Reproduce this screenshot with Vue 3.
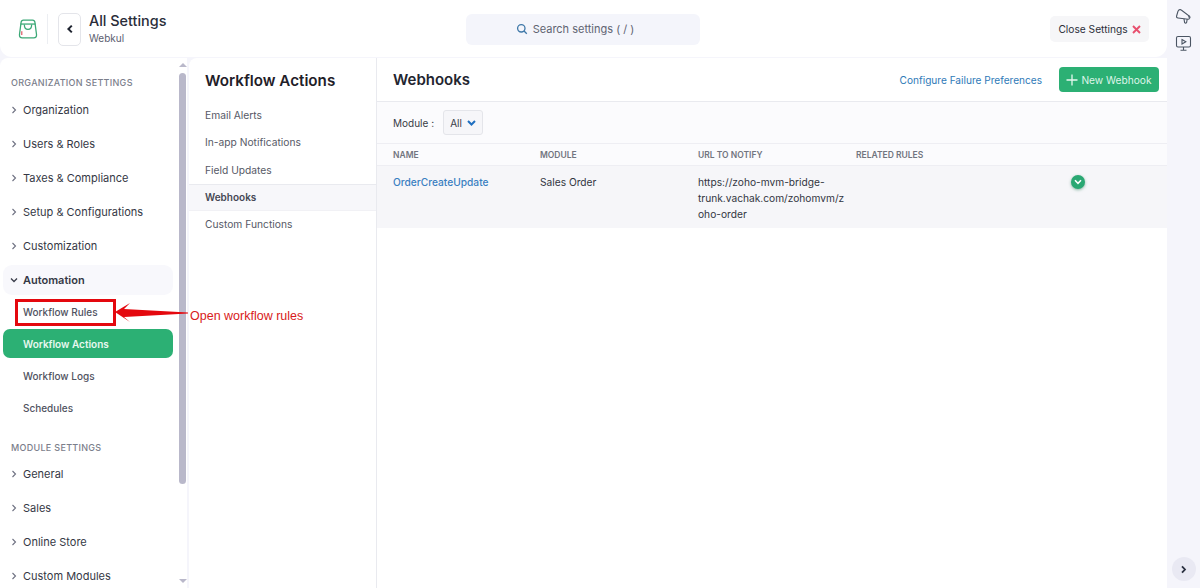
<template>
  <div class="page">
    <div class="workspace">
      <header class="topbar">
        <div class="brand">
          <svg class="logo" width="22" height="22" viewBox="0 0 24 24" fill="none" stroke="#3aa876" stroke-width="1.4">
            <path d="M4.5 4.5 Q4.8 2.2 7 2.2 H17 Q19.2 2.2 19.5 4.5 L21.3 18 Q21.6 21.6 18.3 21.6 H5.7 Q2.4 21.6 2.7 18 Z" />
            <path d="M3.8 6.6 H20.2" />
            <path d="M8 7 Q8 12.4 12 12.4 Q16 12.4 16 7" />
            <path d="M5.2 14.5 V18.5" stroke="#e0606e" />
          </svg>
          <span class="brand-divider"></span>
          <button class="back-btn">
            <svg width="8" height="10" viewBox="0 0 8 10" fill="none" stroke="#1f2430" stroke-width="2">
              <path d="M5.8 1.6 L2.4 5 L5.8 8.4" />
            </svg>
          </button>
          <div class="brand-text">
            <div class="brand-title">All Settings</div>
            <div class="brand-sub">Webkul</div>
          </div>
        </div>
        <div class="search">
          <svg width="12" height="12" viewBox="0 0 12 12" fill="none" stroke="#3f78a8" stroke-width="1.3">
            <circle cx="5.3" cy="5.3" r="3.7" />
            <path d="M8 8 L10.8 10.8" />
          </svg>
          <span>Search settings ( / )</span>
        </div>
        <button class="close-btn">
          Close Settings
          <svg width="9" height="9" viewBox="0 0 9 9" fill="none" stroke="#e8506e" stroke-width="1.9">
            <path d="M1 1 L8 8 M8 1 L1 8" />
          </svg>
        </button>
      </header>

      <div class="body">
        <aside class="sidebar">
          <nav class="side-nav">
            <div class="side-heading">ORGANIZATION SETTINGS</div>
            <div v-for="item in orgItems" :key="item" class="side-item">
              <svg class="chev" width="6" height="8" viewBox="0 0 6 8"><path d="M1.5 1 L4.5 4 L1.5 7" /></svg>
              {{ item }}
            </div>
            <div class="side-item open">
              <svg class="chev down" width="8" height="6" viewBox="0 0 8 6"><path d="M1 1.5 L4 4.5 L7 1.5" /></svg>
              Automation
            </div>
            <div
              v-for="sub in autoItems"
              :key="sub"
              class="sub-item"
              :class="{ active: sub === 'Workflow Actions' }"
            >
              <span>{{ sub }}</span>
            </div>
            <div class="side-heading second">MODULE SETTINGS</div>
            <div v-for="item in moduleItems" :key="item" class="side-item">
              <svg class="chev" width="6" height="8" viewBox="0 0 6 8"><path d="M1.5 1 L4.5 4 L1.5 7" /></svg>
              {{ item }}
            </div>
          </nav>
          <div class="scroll-rail">
            <span class="scroll-up"></span>
            <span class="scroll-thumb"></span>
            <span class="scroll-down"></span>
          </div>
        </aside>

        <section class="actions">
          <h2>Workflow Actions</h2>
          <div
            v-for="a in actionItems"
            :key="a"
            class="action-item"
            :class="{ active: a === 'Webhooks' }"
          >
            {{ a }}
          </div>
        </section>

        <main class="main">
          <div class="main-head">
            <h1>Webhooks</h1>
            <div class="main-tools">
              <a class="pref-link">Configure Failure Preferences</a>
              <button class="new-btn">
                <svg width="12" height="12" viewBox="0 0 12 12" fill="none" stroke="#e6f8ef" stroke-width="1.3">
                  <path d="M6 0.5 V11.5 M0.5 6 H11.5" />
                </svg>
                New Webhook
              </button>
            </div>
          </div>
          <div class="filter">
            <span>Module :</span>
            <div class="select">
              All
              <svg width="9" height="6" viewBox="0 0 9 6" fill="none" stroke="#1f6fc0" stroke-width="2">
                <path d="M1 1 L4.5 4.5 L8 1" />
              </svg>
            </div>
          </div>
          <div class="table-row table-head">
            <div>NAME</div>
            <div>MODULE</div>
            <div>URL TO NOTIFY</div>
            <div>RELATED RULES</div>
            <div></div>
          </div>
          <div class="table-row table-body">
            <div class="hook-name">OrderCreateUpdate</div>
            <div>Sales Order</div>
            <div class="hook-url">https://zoho-mvm-bridge-trunk.vachak.com/zohomvm/zoho-order</div>
            <div></div>
            <div class="hook-status">
              <span class="status-dot">
                <svg width="8" height="6" viewBox="0 0 8 6" fill="none" stroke="#fff" stroke-width="1.6">
                  <path d="M1 1.3 L4 4.3 L7 1.3" />
                </svg>
              </span>
            </div>
          </div>
        </main>
      </div>
    </div>

    <aside class="rail">
      <div class="rail-icons">
        <svg width="16" height="17" viewBox="0 0 16 17" fill="none" stroke="#4b5563" stroke-width="1.1">
          <path d="M5.2 1.6 Q3.8 1.4 3 3.2 L1.6 8 Q1.2 9.8 3 10 L13.2 11.2 Q14.8 11 14.2 9.6 L13.6 7.6 L6.6 2.2 Z" />
          <path d="M9 10.8 L9.6 14.6 Q10.6 15.6 11.6 14.6 L12.2 11.1" />
          <path d="M13.6 7.6 Q15.4 8.4 14.8 10" />
        </svg>
        <svg width="17" height="17" viewBox="0 0 17 17" fill="none" stroke="#4b5563" stroke-width="1.1">
          <rect x="1.5" y="1.5" width="14" height="10.5" rx="1.5" />
          <path d="M7 4.6 L10.8 6.8 L7 9 Z" />
          <path d="M8.5 12 V15 M5.5 15.2 H11.5" />
        </svg>
      </div>
      <button class="rail-toggle">
        <svg width="7" height="9" viewBox="0 0 7 9" fill="none" stroke="#2a3040" stroke-width="1.8">
          <path d="M2 1.3 L5 4.5 L2 7.7" />
        </svg>
      </button>
    </aside>

    <!-- red annotation drawn over the screenshot -->
    <div class="note-box"></div>
    <svg class="note-arrow" width="75" height="20" viewBox="0 0 75 20">
      <path d="M0 9 L15 0 L9 6 L73 9.4 V10.4 L9 14 L15 19 Z" fill="#e4080e" />
    </svg>
    <div class="note-text">Open workflow rules</div>
  </div>
</template>

<script setup>
const orgItems = ['Organization', 'Users & Roles', 'Taxes & Compliance', 'Setup & Configurations', 'Customization']
const autoItems = ['Workflow Rules', 'Workflow Actions', 'Workflow Logs', 'Schedules']
const moduleItems = ['General', 'Sales', 'Online Store', 'Custom Modules']
const actionItems = ['Email Alerts', 'In-app Notifications', 'Field Updates', 'Webhooks', 'Custom Functions']
</script>

<style>
html,
body {
  margin: 0;
  background: #f5f5fb;
}
</style>

<style scoped>
.page {
  position: relative;
  display: flex;
  width: 1200px;
  height: 588px;
  overflow: hidden;
  font-family: Inter, 'Liberation Sans', sans-serif;
  font-size: 11px;
  color: #2c2f3a;
  background: #f5f5fb;
}
.workspace {
  width: 1167px;
  display: flex;
  flex-direction: column;
}

.topbar {
  height: 57px;
  box-sizing: border-box;
  padding: 1px 18px 0 17px;
  display: flex;
  align-items: center;
  background: #fff;
  border-radius: 0 0 12px 12px;
  position: relative;
}
.brand {
  display: flex;
  align-items: center;
  width: 449px;
}
.logo {
  flex: none;
}
.brand-divider {
  width: 1px;
  height: 30px;
  background: #eceef2;
  margin: 0 10px 0 8px;
}
.back-btn {
  width: 23px;
  height: 33px;
  padding: 0;
  display: flex;
  align-items: center;
  justify-content: center;
  background: #fff;
  border: 1px solid #e4e5ea;
  border-radius: 5px;
  margin-right: 8px;
}
.brand-text {
  padding-bottom: 2px;
}
.brand-title {
  font-size: 14.4px;
  font-weight: 500;
  line-height: 18px;
  color: #2a2d3a;
}
.brand-sub {
  font-size: 10px;
  line-height: 14px;
  margin-top: 1px;
  color: #5c6070;
}
.search {
  width: 234px;
  height: 31px;
  box-sizing: border-box;
  padding-right: 16px;
  display: flex;
  align-items: center;
  justify-content: center;
  gap: 5px;
  background: #f4f5fb;
  border-radius: 6px;
  font-size: 11px;
  color: #5f6472;
}
.close-btn {
  margin-left: auto;
  height: 26px;
  width: 99px;
  padding: 0;
  border: 0;
  border-radius: 5px;
  background: #f6f6f8;
  font: inherit;
  font-size: 10.2px;
  color: #2c2f3a;
  display: flex;
  align-items: center;
  justify-content: center;
  gap: 4px;
}

.body {
  flex: 1;
  min-height: 0;
  display: flex;
  margin-top: 1px;
}

.sidebar {
  width: 187px;
  display: flex;
  background: #fff;
  border-radius: 8px 0 0 0;
  overflow: hidden;
}
.side-nav {
  width: 178px;
  box-sizing: border-box;
  padding: 0 5px 0 3px;
  flex: none;
}
.side-heading {
  height: 14px;
  line-height: 14px;
  margin: 18px 0 3px 8px;
  font-size: 9px;
  font-weight: 500;
  letter-spacing: 0.3px;
  color: #7b7e8b;
}
.side-heading.second {
  margin: 17px 0 2px 8px;
}
.side-item {
  height: 34px;
  display: flex;
  align-items: center;
  gap: 6px;
  padding-left: 8px;
  font-size: 11px;
  color: #353845;
}
.side-item.open {
  height: 30px;
  margin: 2px 0 1px;
  gap: 5px;
  padding-left: 7px;
  background: #f8f8fc;
  border-radius: 9px;
  font-weight: 600;
}
.chev {
  flex: none;
  fill: none;
  stroke: #6d7080;
  stroke-width: 1.1;
}
.chev.down {
  stroke: #3a3d49;
  stroke-width: 1.3;
}
.sub-item {
  height: 32px;
  display: flex;
  align-items: center;
  box-sizing: border-box;
  padding-left: 20px;
  font-size: 10px;
  font-weight: 500;
  color: #50535f;
}
.sub-item.active {
  height: 29px;
  margin: 1px 0 2px;
  background: #2cb074;
  border-radius: 7px;
  color: #e8f8f0;
  font-weight: 600;
}
.scroll-rail {
  width: 9px;
  display: flex;
  flex-direction: column;
  align-items: center;
}
.scroll-up,
.scroll-down {
  width: 0;
  height: 0;
  border-left: 4px solid transparent;
  border-right: 4px solid transparent;
}
.scroll-up {
  margin-top: 5px;
  border-bottom: 4px solid #b9b8ca;
}
.scroll-thumb {
  width: 7px;
  height: 411px;
  margin-top: 6px;
  border-radius: 4px;
  background: #b9b8ca;
}
.scroll-down {
  margin-top: auto;
  margin-bottom: 5px;
  border-top: 4px solid #b9b8ca;
}

.actions {
  width: 187px;
  margin-left: 2px;
  background: #fff;
  border-right: 1px solid #e9eaef;
  box-sizing: content-box;
  border-radius: 8px 0 0 0;
}
.actions h2 {
  margin: 0;
  padding: 14px 0 0 16px;
  height: 30px;
  font-size: 15.2px;
  line-height: 18px;
  font-weight: 600;
  color: #1f2028;
}
.action-item {
  height: 27.25px;
  line-height: 27px;
  box-sizing: border-box;
  padding-left: 16px;
  font-size: 10.25px;
  color: #565966;
}
.action-item.active {
  background: #f7f7fa;
  border-top: 1px solid #e9eaef;
  border-bottom: 1px solid #f1f1f5;
  line-height: 25px;
  font-size: 10px;
  font-weight: 600;
  color: #454854;
}

.main {
  flex: 1;
  min-width: 0;
  background: #fff;
}
.main-head {
  height: 43px;
  display: flex;
  align-items: center;
  padding: 0 8px 0 16px;
  border-bottom: 1px solid #e9eaef;
}
.main-head h1 {
  margin: 0;
  font-size: 15px;
  font-weight: 600;
  color: #23252f;
}
.main-tools {
  margin-left: auto;
  display: flex;
  align-items: center;
  gap: 17px;
}
.pref-link {
  font-size: 10.1px;
  color: #2f7ab8;
}
.new-btn {
  width: 100px;
  height: 25px;
  padding: 0;
  border: 0;
  border-radius: 4px;
  background: #2cb074;
  font: inherit;
  font-size: 10.2px;
  color: #dff5ea;
  display: flex;
  align-items: center;
  justify-content: center;
  gap: 3px;
}
.filter {
  height: 41px;
  display: flex;
  align-items: center;
  gap: 9px;
  padding-left: 16px;
  background: #fbfbfd;
  border-bottom: 1px solid #eeeef3;
  font-size: 10px;
  color: #383b46;
}
.select {
  width: 40px;
  height: 25px;
  box-sizing: border-box;
  display: flex;
  align-items: center;
  justify-content: center;
  gap: 5px;
  background: #f6f6f9;
  border: 1px solid #e4e5ea;
  border-radius: 3px;
}
.table-row {
  display: grid;
  grid-template-columns: 147px 158px 158px 200px 1fr;
  padding-left: 16px;
}
.table-head {
  height: 21px;
  align-items: center;
  background: #fbfbfd;
  border-bottom: 1px solid #eeeef3;
  font-size: 8.5px;
  font-weight: 600;
  color: #72757f;
}
.table-body {
  height: 62px;
  padding-top: 8px;
  box-sizing: border-box;
  background: #f6f6f9;
  font-size: 10.2px;
  line-height: 16px;
  color: #32353f;
}
.hook-name {
  color: #3a7fc1;
  font-weight: 500;
}
.hook-url {
  width: 148px;
  overflow-wrap: anywhere;
}
.hook-status {
  padding-left: 15px;
}
.status-dot {
  width: 14px;
  height: 14px;
  margin-top: 1px;
  display: flex;
  align-items: center;
  justify-content: center;
  border-radius: 50%;
  background: #2aa873;
  box-shadow: 0 1px 3px rgba(30, 120, 80, 0.5);
}

.rail {
  flex: 1;
  display: flex;
  flex-direction: column;
  align-items: center;
}
.rail-icons {
  display: flex;
  flex-direction: column;
  gap: 10px;
  margin-top: 8px;
}
.rail-toggle {
  margin-top: auto;
  margin-bottom: 7px;
  width: 24px;
  height: 24px;
  padding: 0;
  border: 0;
  border-radius: 50%;
  background: #e9e9f3;
  display: flex;
  align-items: center;
  justify-content: center;
}

.note-box {
  position: absolute;
  left: 15px;
  top: 299px;
  width: 101px;
  height: 27px;
  box-sizing: border-box;
  border: 3px solid #e4080e;
}
.note-arrow {
  position: absolute;
  left: 115px;
  top: 303px;
}
.note-text {
  position: absolute;
  left: 190px;
  top: 308px;
  font-family: 'Liberation Sans', Arial, sans-serif;
  font-size: 12.5px;
  line-height: 16px;
  color: #d81a20;
}
</style>
